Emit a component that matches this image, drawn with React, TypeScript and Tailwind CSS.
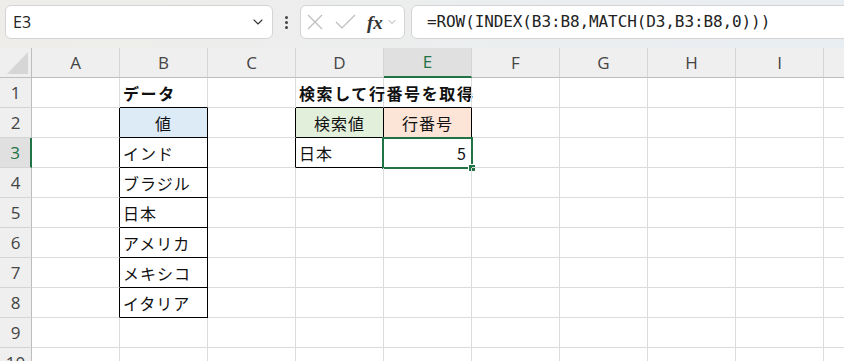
import { ChevronDown } from "lucide-react";

const cols = ["A", "B", "C", "D", "E", "F", "G", "H", "I", ""];
const rows = [1, 2, 3, 4, 5, 6, 7, 8, 9, 10];

type Cell = {
    text?: string;
    bold?: boolean;
    align?: "left" | "center" | "right";
    bg?: string;
    br?: boolean; // black right line
    bb?: boolean; // black bottom line
};

const dataB = ["インド", "ブラジル", "日本", "アメリカ", "メキシコ", "イタリア"];

function buildCells() {
    const cells: Record<string, Cell> = {};
    cells["B1"] = { text: "データ", bold: true, bb: true };
    cells["D1"] = { text: "検索して行番号を取得", bold: true, bb: true };
    cells["E1"] = { bb: true };
    cells["B2"] = { text: "値", align: "center", bg: "bg-[#ddebf7]", br: true, bb: true };
    dataB.forEach((t, i) => {
        cells[`B${i + 3}`] = { text: t, br: true, bb: true };
    });
    for (let r = 2; r <= 8; r++) cells[`A${r}`] = { ...(cells[`A${r}`] || {}), br: true };
    cells["C2"] = { br: true };
    cells["C3"] = { br: true };
    cells["D2"] = { text: "検索値", align: "center", bg: "bg-[#e2efda]", br: true, bb: true };
    cells["E2"] = { text: "行番号", align: "center", bg: "bg-[#fce4d6]", br: true, bb: true };
    cells["D3"] = { text: "日本", br: true, bb: true };
    cells["E3"] = { text: "5", align: "right", br: true, bb: true };
    return cells;
}

const cells = buildCells();
const jp = "font-['Noto_Sans_CJK_JP','Noto_Sans',sans-serif]";

function Toolbar() {
    return (
        <div className="h-[48px] flex items-start pt-[5px] pl-[5px] bg-linear-to-r from-[#eeede9] to-[#e9eef3]">
            <div className="w-[268px] h-[34px] bg-white border border-[#d4d4d4] rounded-[6px] flex items-center pl-[7px] pr-[6px]">
                <span className="flex-1 text-[16px] text-[#222] font-['Open_Sans',sans-serif]">E3</span>
                <ChevronDown size={16} strokeWidth={1.6} className="text-[#333]" />
            </div>
            <div className="w-[27px] h-[34px] flex flex-col items-center justify-center gap-[2px]">
                <span className="w-[3px] h-[3px] bg-[#444] rounded-full" />
                <span className="w-[3px] h-[3px] bg-[#444] rounded-full" />
                <span className="w-[3px] h-[3px] bg-[#444] rounded-full" />
            </div>
            <div className="w-[105px] h-[34px] bg-white border border-[#d4d4d4] rounded-[6px] flex items-center pl-[6px]">
                <svg width="16" height="16" viewBox="0 0 16 16" className="shrink-0">
                    <path d="M1 1 L15 15 M15 1 L1 15" stroke="#bdbdbd" strokeWidth="1.2" fill="none" />
                </svg>
                <svg width="21" height="16" viewBox="0 0 21 16" className="shrink-0 ml-[12px]">
                    <path d="M1 8 L7 14 L20 1" stroke="#bdbdbd" strokeWidth="1.2" fill="none" />
                </svg>
                <span className="ml-[11px] text-[19px] italic font-bold text-[#333] font-['Liberation_Serif',serif] leading-none">fx</span>
                <ChevronDown size={12} strokeWidth={1.4} className="text-[#888] ml-[3px]" />
            </div>
            <div className="ml-[6px] flex-1 -mr-[10px] h-[34px] bg-white border border-[#d4d4d4] rounded-l-[6px] flex items-center pl-[15px]">
                <span className="text-[16px] text-[#222] font-['DejaVu_Sans_Mono',monospace] tracking-[-0.1px]">
                    =ROW(INDEX(B3:B8,MATCH(D3,B3:B8,0)))
                </span>
            </div>
        </div>
    );
}

function Corner() {
    return (
        <div className="w-[32px] h-[30px] shrink-0 bg-[#efefef] border-r border-b border-[#bdbdbd] relative">
            <svg width="32" height="30" className="absolute left-0 top-0">
                <polygon points="28,4 28,26 7,26" fill="#d6d6d6" />
            </svg>
        </div>
    );
}

function HeaderRow() {
    return (
        <div className="flex h-[30px]">
            <Corner />
            {cols.map((c, i) => {
                const sel = c === "E";
                return (
                    <div
                        key={i}
                        className={`w-[88px] shrink-0 h-[30px] flex items-center justify-center text-[17px] font-['Open_Sans',sans-serif] border-r border-[#d4d4d4] ${sel ? "bg-[#e0e0e0] text-[#217346] border-b-2 border-b-[#217346]" : "bg-[#efefef] text-[#444] border-b border-b-[#bdbdbd]"}`}
                    >
                        {c}
                    </div>
                );
            })}
        </div>
    );
}

function GridRow({ r }: { r: number }) {
    const sel = r === 3;
    return (
        <div className="flex h-[30px]">
            <div
                className={`w-[32px] shrink-0 h-[30px] flex items-center justify-center text-[17px] font-['Open_Sans',sans-serif] border-b border-[#d4d4d4] ${sel ? "bg-[#e0e0e0] text-[#217346] border-r-2 border-r-[#217346]" : "bg-[#efefef] text-[#444] border-r border-r-[#bdbdbd]"}`}
            >
                {r}
            </div>
            {cols.map((c, i) => {
                const cell = cells[`${c}${r}`] || {};
                const align =
                    cell.align === "center" ? "justify-center" : cell.align === "right" ? "justify-end pr-[4px]" : "justify-start pl-[3px]";
                return (
                    <div
                        key={i}
                        className={`relative w-[88px] shrink-0 h-[30px] flex items-center border-r border-b ${cell.br ? "border-r-black" : "border-r-[#dcdcdc]"} ${cell.bb ? "border-b-black" : "border-b-[#dcdcdc]"} ${cell.bg || ""}`}
                    >
                        {cell.text && (
                            <span
                                className={`flex w-full ${align} whitespace-nowrap text-[16px] text-[#111] ${jp} ${cell.bold ? "font-bold tracking-[1.6px]" : "tracking-[1px]"}`}
                            >
                                {cell.text}
                            </span>
                        )}
                        {c === "E" && r === 3 && (
                            <div className="absolute -left-[2px] -top-[1px] w-[91px] h-[32px] border-2 border-[#217346] pointer-events-none">
                                <span className="absolute -right-[5px] -bottom-[5px] w-[8px] h-[8px] bg-[#217346] border border-white" />
                            </div>
                        )}
                    </div>
                );
            })}
        </div>
    );
}

export default function App() {
    return (
        <div className="w-[844px] h-[361px] overflow-hidden bg-white">
            <Toolbar />
            <HeaderRow />
            {rows.map((r) => (
                <GridRow key={r} r={r} />
            ))}
        </div>
    );
}
